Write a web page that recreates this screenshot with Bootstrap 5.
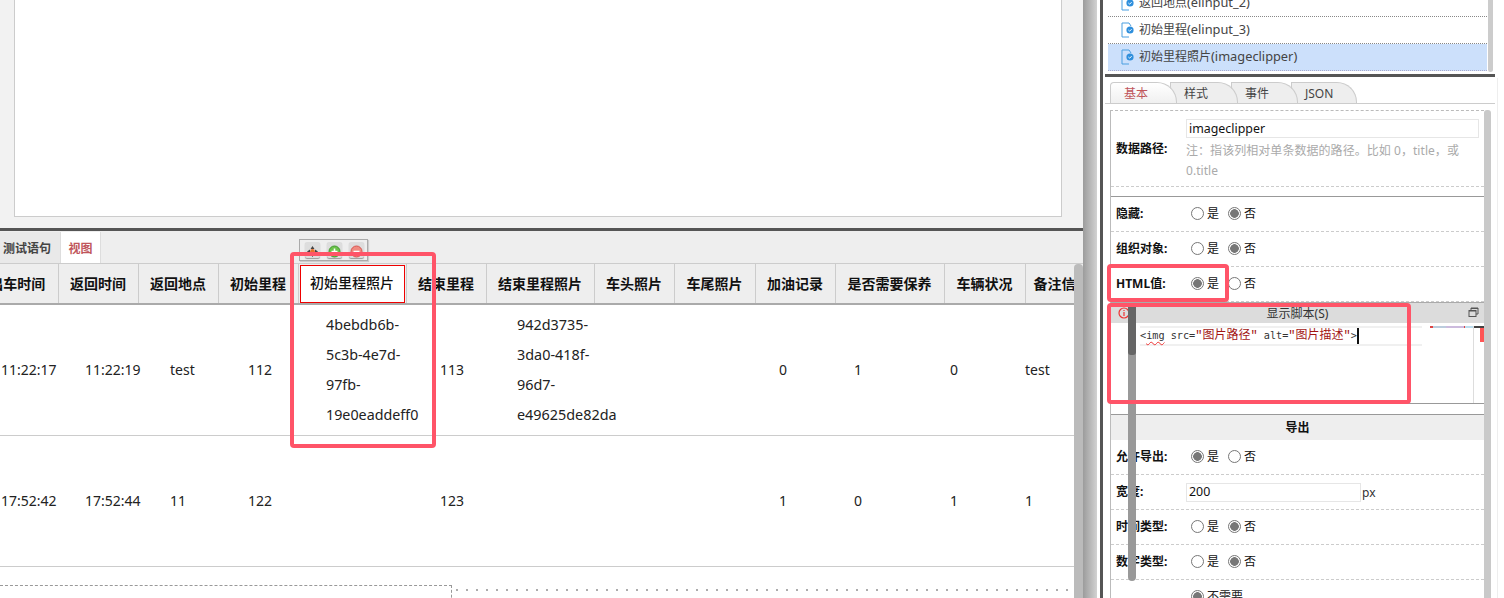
<!DOCTYPE html>
<html lang="zh">
<head>
<meta charset="utf-8">
<title>视图设计</title>
<link href="https://cdn.jsdelivr.net/npm/bootstrap@5.3.0/dist/css/bootstrap.min.css" rel="stylesheet">
<style>
html,body{height:598px;overflow:hidden}
body{position:relative;width:1504px;font-family:"Noto Sans","Noto Sans CJK SC",sans-serif;font-size:12px;color:#222;background:#fff}
.left-pane{width:1083px;height:598px;flex:none}
.top-pane{height:228px;background:#f2f2f2;flex:none}
.canvas-area{width:1048px;height:217px;margin-left:14px;background:#fff;border:solid #ccc;border-width:0 1px 1px 1px}
.split-h{height:3px;background:#555;flex:none}
.tab-strip{height:33px;background:#eee;border-bottom:1px solid #ccc;padding-top:1px;flex:none}
.strip-tab{height:31px;line-height:33px;font-weight:600;font-size:12px;color:#444}
.strip-tab.t-one{width:60px;padding-left:3px;background:#e9e9e9}
.strip-tab.t-two{width:41px;text-align:center;background:#fff;color:#c0565b;border:solid #ddd;border-width:0 1px}
.grid-wrap{height:334px;flex:none;overflow:hidden;position:relative;background:#fff}
.data-table{table-layout:fixed;width:1106px;margin:0 0 0 -23px;border-collapse:collapse;font-size:14px;color:#222}
.data-table th{height:39px;padding:0;text-align:center;background:#eee;font-weight:600;font-size:14px;color:#111;border-right:1px solid #ccc;border-bottom:2px solid #aaa;vertical-align:middle;white-space:nowrap;overflow:hidden}
.data-table td{height:131px;padding:0;border-bottom:1px solid #ccc;vertical-align:middle;line-height:30px;white-space:nowrap;background:#fff}
.data-table th.sel-head{background:#eee;padding:1px 1px 0;font-weight:500}
.sel-inner{height:38px;border:1px solid #e00;line-height:34px;background:#fff}
.pl-a{padding-left:24px!important}.pl-b{padding-left:27px!important}.pl-c{padding-left:32px!important}.pl-d{padding-left:30px!important}.pl-e{padding-left:28px!important;font-size:14.3px}.pl-f{padding-left:34px!important}.pl-g{padding-left:31px!important;font-size:14.4px}.pl-h{padding-left:19px!important}.pl-i{padding-left:6px!important}
.canvas-below{height:32px;margin-top:18px;background-image:radial-gradient(circle,#aaa 0.7px,transparent 1px);background-size:10px 10px;background-position:452px 0}
.drop-box{width:452px;height:32px;background:#fff;border:dashed #999;border-width:1px 1px 0 0}
.grid-scroll{position:absolute;right:0;top:0;width:9px;height:334px;background:#bbb;border-radius:4px 4px 0 0}
.gutter{width:14px;height:598px;flex:none;background:linear-gradient(90deg,#9c9c9c,#d2d2d2)}
.gap-w{width:3px;flex:none;background:#fff}
.split-v{width:3px;flex:none;background:#555}
.right-pane{width:392px;height:598px;flex:none;padding-left:2px;background:#fff;overflow:hidden}
.comp-list{height:74px;flex:none;padding:0 8px 3px 3px}
.comp-row{height:27px;flex:none;border-bottom:1px dotted #888;padding-left:13px;color:#444;font-size:12px;gap:5px}
.comp-row.on{background:#cce0fb;border-bottom-color:#aac}
.lat-text{font-size:12.8px}
.list-scroll{position:absolute;left:1488px;top:0;width:5px;height:72px;background:#ccc;border-radius:0 0 3px 3px}
.split-r{height:3px;background:#555;flex:none}
.prop-tabs{height:27px;flex:none;padding:5px 0 0 5px;border:0;border-bottom:1px solid #ccc;margin-bottom:0}
.prop-tab{height:21px;line-height:21px;font-size:12px;color:#444;background:#eee;border:1px solid #ccc;border-bottom:0;border-radius:0 20px 0 0;margin-left:-7px;padding-left:13px}
.prop-tab.on{background:linear-gradient(#fff,#f0f0f0);color:#c0565b;margin-left:0;width:67px;position:relative;z-index:4;border-radius:4px 20px 0 0;padding-left:13px}
.w-b{width:68px;position:relative;z-index:3}.w-c{width:67px;position:relative;z-index:2}.w-d{width:66px;position:relative;z-index:1}
.prop-body{width:374px;margin-left:5px;margin-top:6px;border-left:1px solid #bbb;border-top:1px dashed #bbb;flex:none}
.prop-row{height:35px;border-bottom:1px dashed #ccc;padding-left:5px}
.prop-label{width:70px;flex:none;font-weight:700;font-size:12px;color:#111}
.radio-set{gap:0;padding-left:5px}
.rdo{appearance:none;-webkit-appearance:none;width:13px;height:13px;margin:0 3px 2px 0;border:1px solid #777;border-radius:50%;background:#fff;flex:none}
.rdo:checked{background:radial-gradient(circle,#777 0,#777 4px,#fff 4.6px)}
.rdo-text{width:21px;font-size:12px;color:#111}
.prop-input{border:1px solid #e6e6e6;height:19px;line-height:15px;padding:0 2px 1px;font-size:12.4px;color:#111;font-family:inherit;display:block;outline:0}
.path-row{height:76px;border-bottom:1px dashed #ccc;padding-left:5px}
.path-input{width:293px;margin-top:8px}
.hint-text{color:#aaa;font-size:12px;line-height:20px;width:282px;margin-top:3px;letter-spacing:.05px}
.solid-gap{height:10px;border-bottom:1px solid #999}
.script-head{height:21px;background:#dcdcdc;border-top:1px solid #aaa;margin-top:0;font-size:12px;color:#333;position:relative;text-align:center;line-height:21px}
.info-ico{position:absolute;left:7px;top:4px}
.win-ico{position:absolute;right:5px;top:4px}
.editor{height:81px;border-bottom:1px solid #999;position:relative;background:#fff}
.code-line{position:absolute;left:29px;top:3px;width:282px;height:20px;background:linear-gradient(#f0f0f0 0 2px,#fff 2px 18px,#f0f0f0 18px);font-family:"DejaVu Sans Mono","Noto Sans CJK SC",monospace;font-size:10.2px;line-height:19px;color:#333;white-space:nowrap}
.code-str{color:#a31515;font-family:"Liberation Mono","Noto Sans CJK SC",monospace;font-size:12px}
.squig{text-decoration:underline wavy #e33 1px;text-underline-offset:2px}
.caret-bar{display:inline-block;width:2px;height:16px;background:#111;vertical-align:middle}
.mini-top{position:absolute;left:319px;top:3px;width:44px;height:2px;background:linear-gradient(90deg,#d44 0 3px,#bcd 3px 16px,#cbd 16px 34px,#d44 34px 35px,#bde 35px)}
.mini-line{position:absolute;left:362px;top:3px;bottom:0;width:1px;background:#ddd}
.mini-dark{position:absolute;left:363px;top:3px;width:10px;height:2px;background:#444}
.mini-red{position:absolute;left:369px;top:5px;width:4px;height:14px;background:#f55}
.sec-head{height:26px;margin-top:10px;background:#eee;border-top:1px solid #999;text-align:center;font-weight:600;line-height:25px;font-size:12px;color:#111}
.unit-text{font-size:12px;color:#333;margin:2px 0 0 1px}
.width-input{width:175px}
.prop-scroll{position:absolute;left:1484px;top:110px;width:7px;height:488px;background:#c9c9c9;border-radius:3px 3px 0 0}
.edge-line{position:absolute;left:1497px;top:78px;width:1px;height:520px;background:#eee}
.ed-thumb{position:absolute;left:1128px;top:307px;width:8px;height:274px;background:#999;border-radius:0 0 4px 4px}
.ed-thumb-top{position:absolute;left:1128px;top:307px;width:8px;height:48px;background:#666;border-radius:0 0 3px 3px}
.mark-box{position:absolute;border:4px solid #ff5468;border-radius:4px;pointer-events:none}
.mark-a{left:290px;top:252px;width:146px;height:196px}
.mark-b{left:1107px;top:264px;width:122px;height:38px}
.mark-c{left:1107px;top:303px;width:304px;height:101px}
.float-tools{position:absolute;left:299px;top:239px;width:69px;height:22px;background:#eee;border:1px solid #aaa;box-shadow:1px 1px 1px #ccc;gap:7px;padding:2px 0 0 5px}
.tool-btn{width:15px;height:16px;background:#ddd;border-radius:2px;box-shadow:0 1px 1px #999}
</style>
</head>
<body class="d-flex">
<div class="left-pane d-flex flex-column">
  <div class="top-pane"><div class="canvas-area"></div></div>
  <div class="split-h"></div>
  <div class="tab-strip d-flex">
    <div class="strip-tab t-one">测试语句</div>
    <div class="strip-tab t-two">视图</div>
  </div>
  <div class="grid-wrap">
    <table class="data-table">
      <colgroup><col style="width:81px"><col style="width:80px"><col style="width:80px"><col style="width:80px"><col style="width:108px"><col style="width:80px"><col style="width:108px"><col style="width:80px"><col style="width:81px"><col style="width:80px"><col style="width:109px"><col style="width:81px"><col style="width:118px"></colgroup>
      <thead><tr>
        <th>出车时间</th><th>返回时间</th><th>返回地点</th><th>初始里程</th><th class="sel-head"><div class="sel-inner">初始里程照片</div></th><th>结束里程</th><th>结束里程照片</th><th>车头照片</th><th>车尾照片</th><th>加油记录</th><th>是否需要保养</th><th>车辆状况</th><th class="text-start ps-2">备注信息</th>
      </tr></thead>
      <tbody>
      <tr>
        <td class="pl-a">11:22:17</td><td class="pl-b">11:22:19</td><td class="pl-c">test</td><td class="pl-d">112</td>
        <td class="pl-e">4bebdb6b-<br>5c3b-4e7d-<br>97fb-<br>19e0eaddeff0</td><td class="pl-f">113</td>
        <td class="pl-g">942d3735-<br>3da0-418f-<br>96d7-<br>e49625de82da</td><td></td><td></td>
        <td class="pl-a">0</td><td class="pl-h">1</td><td class="pl-i">0</td><td>test</td>
      </tr>
      <tr>
        <td class="pl-a">17:52:42</td><td class="pl-b">17:52:44</td><td class="pl-c">11</td><td class="pl-d">122</td>
        <td></td><td class="pl-f">123</td><td></td><td></td><td></td>
        <td class="pl-a">1</td><td class="pl-h">0</td><td class="pl-i">1</td><td>1</td>
      </tr>
      </tbody>
    </table>
    <div class="canvas-below"><div class="drop-box"></div></div>
    <div class="grid-scroll"></div>
  </div>
</div>
<div class="gutter"></div>
<div class="gap-w"></div>
<div class="split-v"></div>
<div class="right-pane d-flex flex-column">
  <div class="comp-list d-flex flex-column justify-content-end">
    <div class="comp-row d-flex align-items-center"><svg width="13" height="16" viewBox="0 0 13 16"><path d="M8 1H1v14h7" fill="none" stroke="#4a9fe0"/><path d="M8 1l2 3" fill="none" stroke="#4a9fe0"/><circle cx="9" cy="8" r="3.6" fill="#2f8fdc"/><path d="M7.4 8l1.2 1.2 2-2" fill="none" stroke="#fff"/></svg><span>返回地点<span class="lat-text">(elinput_2)</span></span></div>
    <div class="comp-row d-flex align-items-center"><svg width="13" height="16" viewBox="0 0 13 16"><path d="M8 1H1v14h7" fill="none" stroke="#4a9fe0"/><path d="M8 1l2 3" fill="none" stroke="#4a9fe0"/><circle cx="9" cy="8" r="3.6" fill="#2f8fdc"/><path d="M7.4 8l1.2 1.2 2-2" fill="none" stroke="#fff"/></svg><span>初始里程<span class="lat-text">(elinput_3)</span></span></div>
    <div class="comp-row on d-flex align-items-center"><svg width="13" height="16" viewBox="0 0 13 16"><path d="M8 1H1v14h7" fill="none" stroke="#4a9fe0"/><path d="M8 1l2 3" fill="none" stroke="#4a9fe0"/><circle cx="9" cy="8" r="3.6" fill="#2f8fdc"/><path d="M7.4 8l1.2 1.2 2-2" fill="none" stroke="#fff"/></svg><span>初始里程照片<span class="lat-text">(imageclipper)</span></span></div>
  </div>
  <div class="split-r"></div>
  <ul class="nav prop-tabs">
    <li class="prop-tab on">基本</li>
    <li class="prop-tab w-b">样式</li>
    <li class="prop-tab w-c">事件</li>
    <li class="prop-tab w-d">JSON</li>
  </ul>
  <div class="prop-body">
    <div class="path-row d-flex align-items-center">
      <div class="prop-label">数据路径:</div>
      <div class="align-self-start">
        <input class="prop-input path-input" value="imageclipper">
        <div class="hint-text">注：指该列相对单条数据的路径。比如 0，title，或 0.title</div>
      </div>
    </div>
    <div class="solid-gap"></div>
    <div class="prop-row d-flex align-items-center"><div class="prop-label">隐藏:</div><div class="radio-set d-flex align-items-center"><input type="radio" class="rdo" name="r1"><span class="rdo-text">是</span><input type="radio" class="rdo" name="r1" checked><span class="rdo-text">否</span></div></div>
    <div class="prop-row d-flex align-items-center"><div class="prop-label">组织对象:</div><div class="radio-set d-flex align-items-center"><input type="radio" class="rdo" name="r2"><span class="rdo-text">是</span><input type="radio" class="rdo" name="r2" checked><span class="rdo-text">否</span></div></div>
    <div class="prop-row d-flex align-items-center"><div class="prop-label">HTML值:</div><div class="radio-set d-flex align-items-center"><input type="radio" class="rdo" name="r3" checked><span class="rdo-text">是</span><input type="radio" class="rdo" name="r3"><span class="rdo-text">否</span></div></div>
    <div class="script-head">
      <svg class="info-ico" width="12" height="12" viewBox="0 0 12 12"><circle cx="6" cy="6" r="5" fill="none" stroke="#e33" stroke-width="1.2"/><path d="M6 3v1M6 5v4" stroke="#e33" stroke-width="1.2"/></svg>
      显示脚本(S)
      <svg class="win-ico" width="11" height="11" viewBox="0 0 11 11"><path d="M3 3V1h7v6H8" fill="none" stroke="#555"/><rect x="1" y="3.5" width="7" height="6" fill="none" stroke="#555"/><path d="M1 4h7M3 1.5h7" stroke="#555"/></svg>
    </div>
    <div class="editor">
      <div class="code-line">&lt;<span class="squig">img</span> src=<span class="code-str">"图片路径"</span> alt=<span class="code-str">"图片描述"</span>&gt;<span class="caret-bar"></span></div>
      <div class="mini-top"></div><div class="mini-line"></div><div class="mini-dark"></div><div class="mini-red"></div>
    </div>
    <div class="sec-head">导出</div>
    <div class="prop-row d-flex align-items-center"><div class="prop-label">允许导出:</div><div class="radio-set d-flex align-items-center"><input type="radio" class="rdo" name="r4" checked><span class="rdo-text">是</span><input type="radio" class="rdo" name="r4"><span class="rdo-text">否</span></div></div>
    <div class="prop-row d-flex align-items-center"><div class="prop-label">宽度:</div><input class="prop-input width-input" value="200"><span class="unit-text">px</span></div>
    <div class="prop-row d-flex align-items-center"><div class="prop-label">时间类型:</div><div class="radio-set d-flex align-items-center"><input type="radio" class="rdo" name="r5"><span class="rdo-text">是</span><input type="radio" class="rdo" name="r5" checked><span class="rdo-text">否</span></div></div>
    <div class="prop-row d-flex align-items-center"><div class="prop-label">数字类型:</div><div class="radio-set d-flex align-items-center"><input type="radio" class="rdo" name="r6"><span class="rdo-text">是</span><input type="radio" class="rdo" name="r6" checked><span class="rdo-text">否</span></div></div>
    <div class="prop-row d-flex align-items-center"><div class="prop-label"></div><div class="radio-set d-flex align-items-center"><input type="radio" class="rdo" name="r7" checked><span>不需要</span></div></div>
  </div>
</div>
<div class="list-scroll"></div>
<div class="prop-scroll"></div>
<div class="edge-line"></div>
<div class="ed-thumb"></div>
<div class="ed-thumb-top"></div>
<div class="float-tools d-flex">
  <div class="tool-btn"><svg width="15" height="15" viewBox="0 0 15 15"><path d="M7.5 2l2 3h-4zM7.5 13l-2-3h4zM2 7.5l3-2v4zM13 7.5l-3 2v-4z" fill="#444"/><circle cx="7.5" cy="7.5" r="2.4" fill="#e8702a"/></svg></div>
  <div class="tool-btn"><svg width="15" height="15" viewBox="0 0 15 15"><circle cx="7.5" cy="7.5" r="5.5" fill="#6cc24a" stroke="#3e9a2a"/><path d="M4.5 7.5h6M7.5 4.5v6" stroke="#fff" stroke-width="1.6"/></svg></div>
  <div class="tool-btn"><svg width="15" height="15" viewBox="0 0 15 15"><circle cx="7.5" cy="7.5" r="5.5" fill="#f08a80" stroke="#d9534f"/><path d="M4.5 7.5h6" stroke="#fff" stroke-width="1.6"/></svg></div>
</div>
<div class="mark-box mark-a"></div>
<div class="mark-box mark-b"></div>
<div class="mark-box mark-c"></div>
<script src="https://cdn.jsdelivr.net/npm/bootstrap@5.3.0/dist/js/bootstrap.bundle.min.js"></script>
</body>
</html>
